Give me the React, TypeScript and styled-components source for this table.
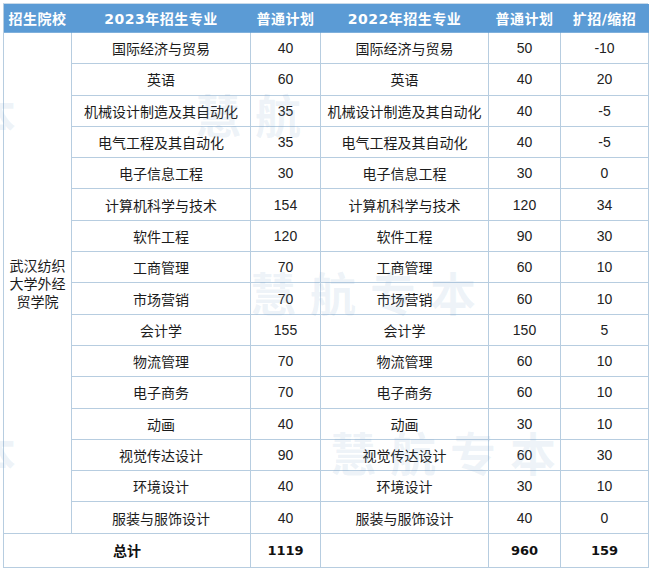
import React from "react";
import styled, { createGlobalStyle } from "styled-components";

const Global = createGlobalStyle`
  html, body { margin: 0; padding: 0; background: #ffffff; }
  body { font-family: "Noto Sans CJK SC", "Noto Sans", sans-serif; }
`;

const Page = styled.div`
  position: relative;
  width: 650px;
  height: 571px;
  padding: 3px 2px 0 3px;
  box-sizing: border-box;
  overflow: hidden;
`;

const Table = styled.div`
  display: grid;
  grid-template-columns: 68px 179px 70px 168px 72px 88px;
  grid-template-rows: 29px repeat(16, 31.3px) 34px;
  border-left: 1px solid #b7cde0;
  border-top: 1px solid #c9dae9;
  width: 645px;
  box-sizing: border-box;
`;

const Cell = styled.div<{ $span?: number; $rows?: number }>`
  display: flex;
  align-items: center;
  justify-content: center;
  text-align: center;
  box-sizing: border-box;
  border-right: 1px solid #b7cde0;
  border-bottom: 1px solid #b7cde0;
  font-size: 14px;
  color: #1c1c1c;
  grid-column: ${(p) => (p.$span ? `span ${p.$span}` : "auto")};
  grid-row: ${(p) => (p.$rows ? `span ${p.$rows}` : "auto")};
  white-space: nowrap;
`;

const HeadCell = styled(Cell)`
  background: #5b9bd5;
  color: #ffffff;
  font-weight: bold;
  font-size: 14px;
  font-family: "DejaVu Sans", "Noto Sans CJK SC", sans-serif;
  border-right-color: #5b9bd5;
  border-bottom-color: #7fb0dc;
  letter-spacing: 0.5px;
`;

const NameCell = styled(Cell)`
  font-family: "Noto Sans CJK SC", sans-serif;
`;

const NumCell = styled(Cell)`
  font-family: "Liberation Sans", Arial, sans-serif;
  font-size: 14px;
  color: #222;
`;

const CollegeCell = styled(Cell)`
  white-space: normal;
  line-height: 18px;
  padding: 0 5px;
  font-family: "Noto Sans CJK SC", sans-serif;
`;

const TotalLabel = styled(Cell)`
  font-weight: bold;
  font-family: "Noto Sans CJK SC", sans-serif;
  color: #111;
`;

const TotalNum = styled(Cell)`
  font-weight: bold;
  font-family: "DejaVu Sans", sans-serif;
  font-size: 13px;
  color: #111;
`;

const Watermark = styled.div<{ $x: number; $y: number; $size?: number }>`
  position: absolute;
  left: ${(p) => p.$x}px;
  top: ${(p) => p.$y}px;
  font-size: ${(p) => p.$size ?? 46}px;
  font-weight: bold;
  font-family: "Noto Sans CJK SC", sans-serif;
  color: rgba(120, 160, 200, 0.13);
  letter-spacing: 14px;
  pointer-events: none;
  white-space: nowrap;
`;

type Row = [string, number, string, number, number];

const rows: Row[] = [
  ["国际经济与贸易", 40, "国际经济与贸易", 50, -10],
  ["英语", 60, "英语", 40, 20],
  ["机械设计制造及其自动化", 35, "机械设计制造及其自动化", 40, -5],
  ["电气工程及其自动化", 35, "电气工程及其自动化", 40, -5],
  ["电子信息工程", 30, "电子信息工程", 30, 0],
  ["计算机科学与技术", 154, "计算机科学与技术", 120, 34],
  ["软件工程", 120, "软件工程", 90, 30],
  ["工商管理", 70, "工商管理", 60, 10],
  ["市场营销", 70, "市场营销", 60, 10],
  ["会计学", 155, "会计学", 150, 5],
  ["物流管理", 70, "物流管理", 60, 10],
  ["电子商务", 70, "电子商务", 60, 10],
  ["动画", 40, "动画", 30, 10],
  ["视觉传达设计", 90, "视觉传达设计", 60, 30],
  ["环境设计", 40, "环境设计", 30, 10],
  ["服装与服饰设计", 40, "服装与服饰设计", 40, 0],
];

export default function App() {
  return (
    <>
      <Global />
      <Page>
        <Table>
          <HeadCell>招生院校</HeadCell>
          <HeadCell>2023年招生专业</HeadCell>
          <HeadCell>普通计划</HeadCell>
          <HeadCell>2022年招生专业</HeadCell>
          <HeadCell>普通计划</HeadCell>
          <HeadCell>扩招/缩招</HeadCell>
          {rows.map((r, i) => (
            <React.Fragment key={i}>
              {i === 0 && <CollegeCell $rows={16}>武汉纺织大学外经贸学院</CollegeCell>}
              <NameCell>{r[0]}</NameCell>
              <NumCell>{r[1]}</NumCell>
              <NameCell>{r[2]}</NameCell>
              <NumCell>{r[3]}</NumCell>
              <NumCell>{r[4]}</NumCell>
            </React.Fragment>
          ))}
          <TotalLabel $span={2}>总计</TotalLabel>
          <TotalNum>1119</TotalNum>
          <TotalNum />
          <TotalNum>960</TotalNum>
          <TotalNum>159</TotalNum>
        </Table>
        <Watermark $x={-30} $y={80}>本</Watermark>
        <Watermark $x={195} $y={80}>慧航</Watermark>
        <Watermark $x={250} $y={258}>慧航专本</Watermark>
        <Watermark $x={-30} $y={418}>本</Watermark>
        <Watermark $x={330} $y={418}>慧航专本</Watermark>
      </Page>
    </>
  );
}
